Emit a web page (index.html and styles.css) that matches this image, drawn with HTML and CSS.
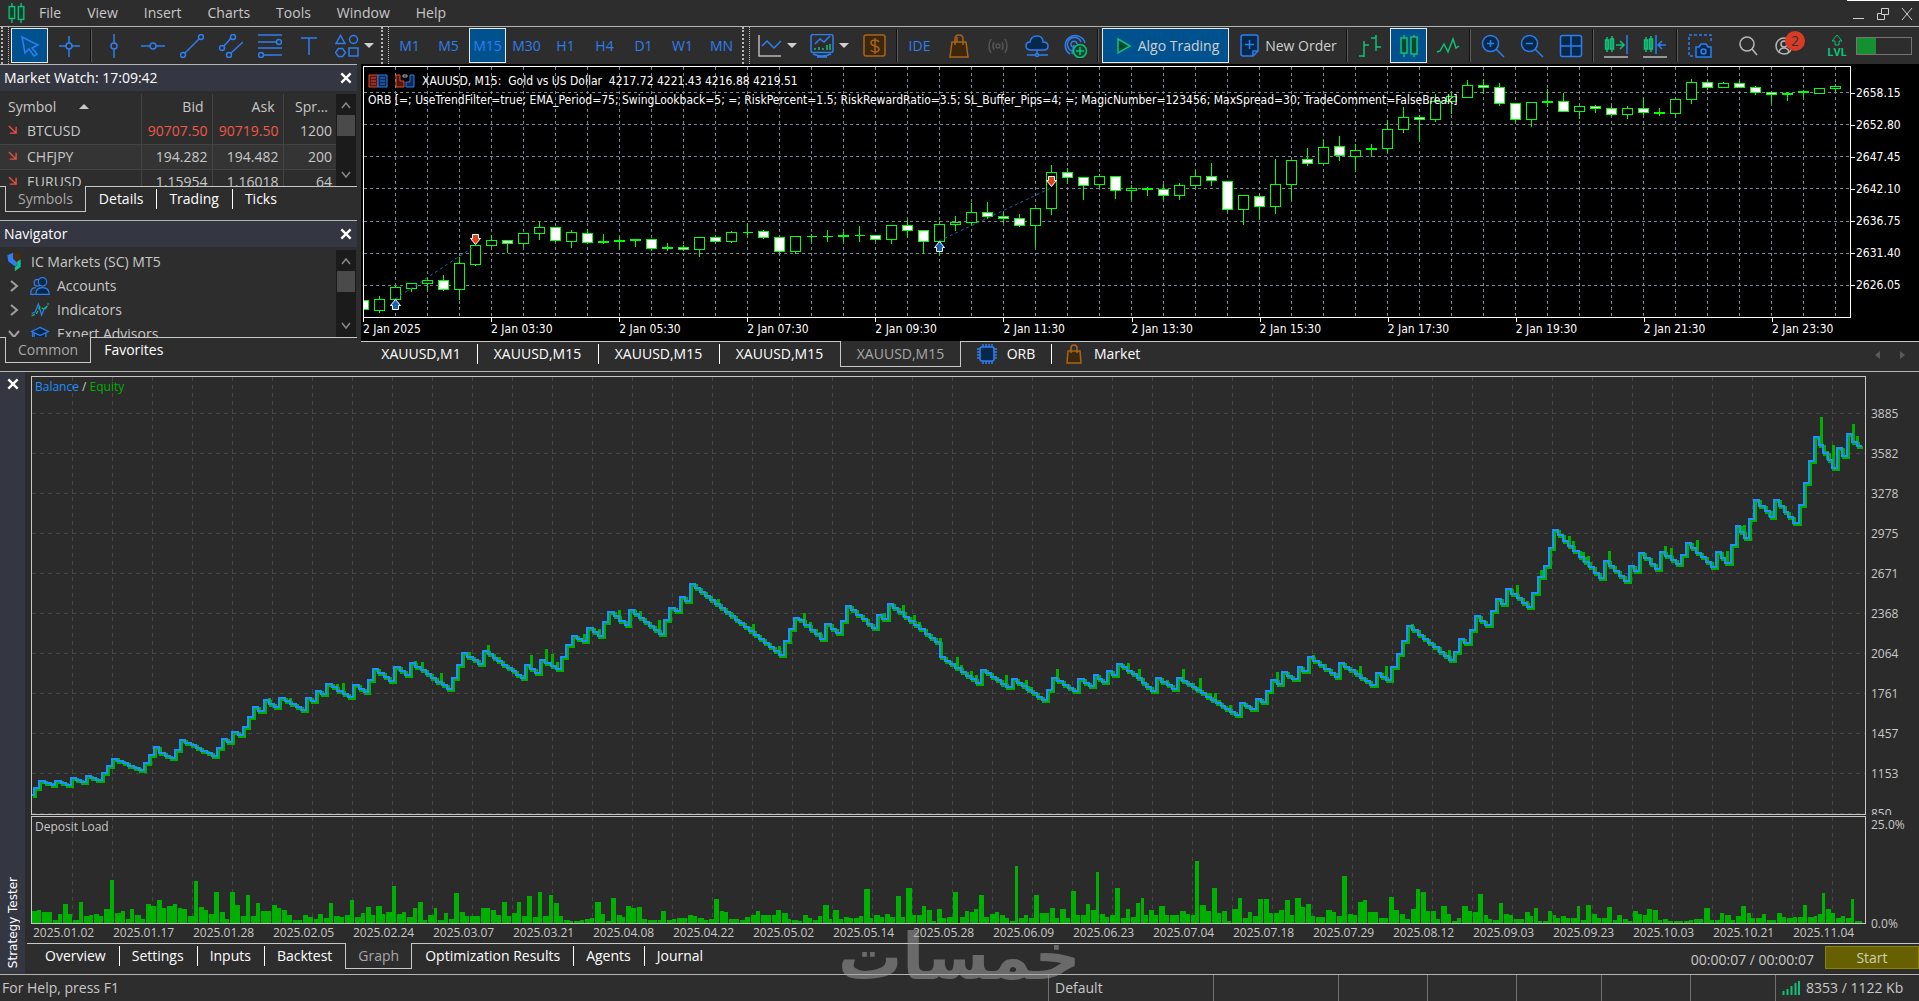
FILE: index.html
```html
<!DOCTYPE html>
<html lang="en">
<head>
<meta charset="utf-8">
<title>XAUUSD, M15 - Strategy Tester</title>
<link rel="stylesheet" href="styles.css">
</head>
<body>
<header class="menubar">
  <svg class="icon app-icon" viewBox="0 0 20 24"><path d="M5 1v22M15 1v22" class="g"/><rect x="2" y="5" width="6" height="13" class="g gf"/><rect x="12" y="5" width="6" height="14" class="g gf"/></svg>
  <nav class="menu">
    <a href="#">File</a><a href="#">View</a><a href="#">Insert</a><a href="#">Charts</a><a href="#">Tools</a><a href="#">Window</a><a href="#">Help</a>
  </nav>
  <div class="window-controls">
    <button aria-label="Minimize"><svg viewBox="0 0 14 14"><path d="M1 11.5h11"/></svg></button>
    <button aria-label="Restore"><svg viewBox="0 0 14 14"><path d="M5.500 1.500h7v6h-7zM8.500 8v4.500h-7v-6h4"/></svg></button>
    <button aria-label="Close"><svg viewBox="0 0 14 14"><path d="M2 1l10 12M12 1L2 13"/></svg></button>
  </div>
</header>

<div class="toolbar">
  <span class="grip"></span>
  <button class="tool active" aria-label="Cursor"><svg class="icon" viewBox="0 0 24 24"><path class="b" d="M4 3l16 8-6 3 5 6-3 2-5-7-4 4z"/></svg></button>
  <button class="tool" aria-label="Crosshair"><svg class="icon" viewBox="0 0 24 24"><path class="b" d="M12 2v7M12 15v8M2 12h7M15 12h8"/><circle class="b" cx="12" cy="12" r="3"/></svg></button>
  <span class="sep"></span>
  <button class="tool" aria-label="Vertical line"><svg class="icon" viewBox="0 0 24 24"><path class="b" d="M12 0v9M12 15v9"/><circle class="b" cx="12" cy="12" r="3"/></svg></button>
  <button class="tool" aria-label="Horizontal line"><svg class="icon" viewBox="0 0 24 24"><path class="b" d="M0 12h9M15 12h9"/><circle class="b" cx="12" cy="12" r="3"/></svg></button>
  <button class="tool" aria-label="Trend line"><svg class="icon" viewBox="0 0 24 24"><path class="b" d="M5 19L19 5"/><circle class="b" cx="3" cy="21" r="2.500"/><circle class="b" cx="21" cy="3" r="2.500"/></svg></button>
  <button class="tool" aria-label="Channel"><svg class="icon" viewBox="0 0 24 24"><path class="b" d="M5 12l7-8M12 19L24 8"/><circle class="b" cx="3" cy="14" r="2.500"/><circle class="b" cx="14" cy="3" r="2.500"/><circle class="b" cx="10" cy="21" r="2.500"/></svg></button>
  <button class="tool" aria-label="Fibonacci"><svg class="icon" viewBox="0 0 24 24"><path class="b" d="M0 1h24M0 8h18M0 14h24M6 21h18"/><circle class="b" cx="21" cy="8" r="2.500"/><circle class="b" cx="3" cy="21" r="2.500"/></svg></button>
  <button class="tool" aria-label="Text"><svg class="icon" viewBox="0 0 24 24"><path class="b" d="M4 4h16M12 4v17"/></svg></button>
  <button class="tool menu-tool" aria-label="Shapes"><svg class="icon" viewBox="0 0 24 24"><path class="b" d="M5.500 1.500L10 9.500H1zM14 14h9v8h-9zM3.500 14.500h4l3 4-3 4h-4l-3-4z"/><circle class="b" cx="18.500" cy="5.500" r="4"/></svg><i class="caret"></i></button>
  <span class="grip"></span>
  <button class="tool">M1</button><button class="tool">M5</button><button class="tool active">M15</button><button class="tool">M30</button><button class="tool">H1</button><button class="tool">H4</button><button class="tool">D1</button><button class="tool">W1</button><button class="tool">MN</button>
  <span class="grip"></span>
  <button class="tool menu-tool" aria-label="Chart type"><svg class="icon" viewBox="0 0 24 24"><path class="w" d="M1 1v21h22"/><path class="b" d="M4 12l5-5 7 7 7-7"/></svg><i class="caret"></i></button>
  <button class="tool menu-tool" aria-label="Indicators"><svg class="icon" viewBox="0 0 24 24"><rect class="b" x="1" y="0.500" width="22" height="18" rx="2"/><path class="b" d="M3 20q9 4 18 0M7 23h10M5 10l5-5 4 3 6-6"/><path class="g" d="M5 16v-2M9 16v-3M13 16v-2M17 16v-5M20 16v-6"/></svg><i class="caret"></i></button>
  <button class="tool" aria-label="Trade"><svg class="icon" viewBox="0 0 24 24"><rect class="o of" x="1" y="1" width="21" height="21" rx="2"/><path class="o" d="M16 8q-1-2-4-2-4 0-4 3 0 2 4 3t4 3q0 3-4 3-3 0-4-2M12 4v16"/></svg></button>
  <span class="sep"></span>
  <button class="tool">IDE</button>
  <button class="tool" aria-label="Market"><svg class="icon" viewBox="0 0 24 24"><path class="o of" d="M5 8h14l2 15H3z"/><path class="o" d="M8 11V5q0-4 4-4t4 4v6M10 8V3"/></svg></button>
  <button class="tool" aria-label="Signals"><svg class="icon" viewBox="0 0 24 24"><path class="d" d="M5 5q-4 7 0 14M8 8q-2 4 0 8M19 5q4 7 0 14M16 8q2 4 0 8"/><circle class="d" cx="12" cy="12" r="2"/></svg></button>
  <button class="tool" aria-label="VPS"><svg class="icon" viewBox="0 0 24 24"><path class="b bf" d="M6 16q-5 0-5-4t4-4q1-6 7-6t6 6q5 0 5 4t-4 4z"/><path class="b" d="M12 16v4M2 21h8M14 21h9"/><circle class="b" cx="12" cy="21" r="1.500"/></svg></button>
  <button class="tool" aria-label="Community"><svg class="icon" viewBox="0 0 24 24"><path class="b" d="M6 20A10 10 0 1 1 21 9M8 17a7 7 0 1 1 9-9M9 13a3 3 0 1 1 4-3M10 11l-2 9"/><circle class="g gf" cx="16" cy="17" r="6.500"/><path class="g" d="M16 13v8M12 17h8"/></svg></button>
  <span class="sep"></span>
  <button class="tool active wide"><svg class="icon" viewBox="0 0 24 24"><path class="g gf" d="M6 5l12 7-12 7z"/></svg>Algo Trading</button>
  <button class="tool wide order"><svg class="icon" viewBox="0 0 24 24"><path class="b bf" d="M5 1h13q2 0 2 2v14l-5 5H5q-2 0-2-2V3q0-2 2-2z"/><path class="b" d="M11.500 6v9M7 10.500h9M15 22v-5h5"/></svg>New Order</button>
  <span class="sep"></span>
  <button class="tool" aria-label="Bars"><svg class="icon" viewBox="0 0 24 24"><path class="g" d="M6 7v16M1 22h5M6 11h5M18 1v16M13 4h5M18 13h5"/></svg></button>
  <button class="tool active" aria-label="Candles"><svg class="icon" viewBox="0 0 24 24"><path class="g" d="M7 1v22M17 1v22"/><rect class="g gf" x="4" y="4" width="6" height="15"/><rect class="g gf" x="14" y="3" width="6" height="17"/></svg></button>
  <button class="tool" aria-label="Line"><svg class="icon" viewBox="0 0 24 24"><path class="g" d="M1 18l3-1 4-7 4 8 5-13 3 9 3-2"/></svg></button>
  <span class="sep"></span>
  <button class="tool" aria-label="Zoom in"><svg class="icon" viewBox="0 0 24 24"><circle class="b bf" cx="9.500" cy="9.500" r="8"/><path class="b" d="M15 15l8 8M9.500 6v7M6 9.500h7"/></svg></button>
  <button class="tool" aria-label="Zoom out"><svg class="icon" viewBox="0 0 24 24"><circle class="b bf" cx="9.500" cy="9.500" r="8"/><path class="b" d="M15 15l8 8M6 9.500h7"/></svg></button>
  <button class="tool" aria-label="Tile"><svg class="icon" viewBox="0 0 24 24"><rect class="b bf" x="1.500" y="1.500" width="21" height="21" rx="2"/><path class="b" d="M12 2v20M2 12h20"/></svg></button>
  <span class="sep"></span>
  <button class="tool" aria-label="Auto scroll"><svg class="icon" viewBox="0 0 24 24"><path class="g" d="M3 3v15M8 2v16M12 11h7M16 7l4 4-4 4"/><path class="g" d="M1.500 6h3v9h-3zM6.500 5h3v10h-3z"/><path class="b" d="M23 1v19"/><path class="w" d="M0 23h24"/></svg></button>
  <button class="tool" aria-label="Shift"><svg class="icon" viewBox="0 0 24 24"><path class="g" d="M3 3v15M8 2v16"/><path class="g" d="M1.500 6h3v9h-3zM6.500 5h3v10h-3z"/><path class="b" d="M13 1v19M23 11h-7M19 7l-4 4 4 4"/><path class="w" d="M0 23h24"/></svg></button>
  <span class="sep"></span>
  <button class="tool" aria-label="Screenshot"><svg class="icon" viewBox="0 0 24 24"><path class="b" stroke-dasharray="3 2" d="M5 22H1V1h22v8"/><path class="b bf" d="M8 13h3l2-3h5l2 3h3v10H8z"/><circle class="b" cx="15.500" cy="17.500" r="2.500"/></svg></button>
  <div class="toolbar-end">
    <button class="tool" aria-label="Search"><svg class="icon" viewBox="0 0 24 24"><circle class="w" cx="11" cy="10" r="7"/><path class="w" d="M16 15l5 6"/></svg></button>
    <button class="tool account" aria-label="Notifications"><svg class="icon" viewBox="0 0 24 24"><circle class="w" cx="9" cy="12" r="8"/><circle class="w" cx="9" cy="10" r="3"/><path class="w" d="M4 18q1-4 5-4t5 4"/></svg><b class="badge">2</b></button>
    <div class="level"><svg viewBox="0 0 14 12"><path class="g" d="M5 11V7H2l5-6 5 6H9v4z"/></svg>LVL</div>
    <div class="meter"><span></span></div>
  </div>
</div>

<main class="upper">
  <aside class="side">
    <section class="panel">
      <h2>Market Watch: 17:09:42<button class="close" aria-label="Close Market Watch"><svg viewBox="0 0 12 12"><path d="M2 2l8 8M10 2l-8 8"/></svg></button></h2>
      <div class="panel-body">
        <table class="quotes">
          <thead><tr><th>Symbol<i class="caret up"></i></th><th>Bid</th><th>Ask</th><th>Spr...</th></tr></thead>
          <tbody>
            <tr><td><svg viewBox="0 0 10 10"><path d="M1 1l8 8M9 2v7H2"/></svg>BTCUSD</td><td class="down">90707.50</td><td class="down">90719.50</td><td>1200</td></tr>
            <tr><td><svg viewBox="0 0 10 10"><path d="M1 1l8 8M9 2v7H2"/></svg>CHFJPY</td><td>194.282</td><td>194.482</td><td>200</td></tr>
            <tr><td><svg viewBox="0 0 10 10"><path d="M1 1l8 8M9 2v7H2"/></svg>EURUSD</td><td>1.15954</td><td>1.16018</td><td>64</td></tr>
          </tbody>
        </table>
        <div class="scroll"><svg viewBox="0 0 12 8"><path d="M2 7l4-5 4 5"/></svg><span></span><svg viewBox="0 0 12 8"><path d="M2 1l4 5 4-5"/></svg></div>
      </div>
      <nav class="tabs"><a href="#" class="on">Symbols</a><a href="#">Details</a><a href="#">Trading</a><a href="#">Ticks</a></nav>
    </section>
    <section class="panel">
      <h2>Navigator<button class="close" aria-label="Close Navigator"><svg viewBox="0 0 12 12"><path d="M2 2l8 8M10 2l-8 8"/></svg></button></h2>
      <div class="panel-body">
        <ul class="tree">
          <li class="root"><svg class="icon" viewBox="0 0 20 24"><path fill="#2d7ff0" d="M2 4l7-3v7l5 5v3l-3 1-8-6z"/><path fill="#4a2c10" d="M10 1l8 1v7l-6 2-3-4z"/><path fill="#18c088" d="M18 9v9l-7 5v-5l3-2v-5z"/></svg>IC Markets (SC) MT5</li>
          <li><svg class="chev" viewBox="0 0 12 12"><path d="M3 1l6 5-6 5"/></svg><svg class="icon" viewBox="0 0 24 24"><circle class="b" cx="9" cy="8" r="4"/><circle class="b bf" cx="15" cy="7" r="5"/><path class="b" d="M7 14q-6 0-6 6v2h6"/><path class="b bf" d="M7 22q0-8 8-8t8 8z"/></svg>Accounts</li>
          <li><svg class="chev" viewBox="0 0 12 12"><path d="M3 1l6 5-6 5"/></svg><svg class="icon" viewBox="0 0 24 24"><path class="b" d="M2 16l4-1 4-10 4 13 3-8 4-3"/><path class="g" stroke-dasharray="4 2" d="M2 19l6-3 4-8 6 4 4-8"/></svg>Indicators</li>
          <li><svg class="chev open" viewBox="0 0 12 12"><path d="M1 3l5 6 5-6"/></svg><svg class="icon" viewBox="0 0 24 24"><path class="b bf" d="M5 10v9q7 5 14 0v-9"/><path class="b bf" d="M12 4l10 5-10 5L2 9zM3 9v8"/></svg>Expert Advisors</li>
        </ul>
        <div class="scroll"><svg viewBox="0 0 12 8"><path d="M2 7l4-5 4 5"/></svg><span></span><svg viewBox="0 0 12 8"><path d="M2 1l4 5 4-5"/></svg></div>
      </div>
      <nav class="tabs"><a href="#" class="on">Common</a><a href="#">Favorites</a></nav>
    </section>
  </aside>

  <section class="chart-area">
    <div class="price-chart">
      <div class="price-plot">
        <svg id="candles" viewBox="364 67 1486 250" preserveAspectRatio="none"></svg>
        <div class="chart-info">
          <p><svg class="icon" viewBox="0 0 20 14"><path d="M1 1h9v12H1z" fill="#501810" stroke="#e04a30"/><path d="M10 1h9v12h-9z" fill="#0a2850" stroke="#2d7ff0"/><path d="M3 4h5M3 7h5M3 10h5" stroke="#e04a30"/><path d="M12 4h5M12 7h5M12 10h5" stroke="#2d7ff0"/></svg><svg class="icon" viewBox="0 0 20 14"><path d="M1 1h4v6h4v6H1z" fill="#501810" stroke="#e04a30"/><path d="M11 13V8h4V1h4v12z" fill="#0a2850" stroke="#2d7ff0"/><path d="M8 1h4v2H8z" stroke="#aaa" fill="none"/></svg><span>XAUUSD, M15:&nbsp; Gold vs US Dollar&nbsp; 4217.72 4221.43 4216.88 4219.51</span></p>
          <p>ORB [=; UseTrendFilter=true; EMA_Period=75; SwingLookback=5; =; RiskPercent=1.5; RiskRewardRatio=3.5; SL_Buffer_Pips=4; =; MagicNumber=123456; MaxSpread=30; TradeComment=FalseBreak]</p>
        </div>
      </div>
      <div class="price-axis"><span>2658.15</span><span>2652.80</span><span>2647.45</span><span>2642.10</span><span>2636.75</span><span>2631.40</span><span>2626.05</span></div>
      <div class="time-axis"><span>2 Jan 2025</span><span>2 Jan 03:30</span><span>2 Jan 05:30</span><span>2 Jan 07:30</span><span>2 Jan 09:30</span><span>2 Jan 11:30</span><span>2 Jan 13:30</span><span>2 Jan 15:30</span><span>2 Jan 17:30</span><span>2 Jan 19:30</span><span>2 Jan 21:30</span><span>2 Jan 23:30</span></div>
    </div>
    <nav class="tabs chart-tabs">
      <a href="#">XAUUSD,M1</a><a href="#">XAUUSD,M15</a><a href="#">XAUUSD,M15</a><a href="#">XAUUSD,M15</a><a href="#" class="on">XAUUSD,M15</a>
      <a href="#"><svg class="icon" viewBox="0 0 20 20"><path class="b" d="M6 0v20M9 0v20M12 0v20M15 0v20M0 5h20M0 8h20M0 11h20M0 14h20"/><rect class="b bf" x="3" y="3" width="14" height="14" rx="2"/></svg>ORB</a>
      <a href="#"><svg class="icon" viewBox="0 0 20 20"><path class="o of" d="M4 7h12l1 12H3z"/><path class="o" d="M7 9V4q0-3 3-3t3 3v5"/></svg>Market</a>
      <span class="pager"><svg viewBox="0 0 5 8"><path d="M5 0v8L0 4z"/></svg><svg viewBox="0 0 5 8"><path d="M0 0v8l5-4z"/></svg></span>
    </nav>
  </section>
</main>

<section class="tester">
  <div class="tester-strip">
    <button class="close" aria-label="Close Strategy Tester"><svg viewBox="0 0 12 12"><path d="M2 2l8 8M10 2l-8 8"/></svg></button>
    <h2>Strategy Tester</h2>
  </div>
  <div class="tester-body">
    <div class="graphs">
      <div class="plot"><svg id="balance" viewBox="32 377 1833 437" preserveAspectRatio="none"></svg><p class="legend"><span class="bal">Balance</span> / <span class="eq">Equity</span></p></div>
      <div class="value-axis"><span>3885</span><span>3582</span><span>3278</span><span>2975</span><span>2671</span><span>2368</span><span>2064</span><span>1761</span><span>1457</span><span>1153</span><span>850</span></div>
      <div class="plot"><svg id="deposit" viewBox="32 817 1833 106" preserveAspectRatio="none"></svg><p class="legend">Deposit Load</p></div>
      <div class="load-axis"><span>25.0%</span><span>0.0%</span></div>
      <div class="date-axis"><span>2025.01.02</span><span>2025.01.17</span><span>2025.01.28</span><span>2025.02.05</span><span>2025.02.24</span><span>2025.03.07</span><span>2025.03.21</span><span>2025.04.08</span><span>2025.04.22</span><span>2025.05.02</span><span>2025.05.14</span><span>2025.05.28</span><span>2025.06.09</span><span>2025.06.23</span><span>2025.07.04</span><span>2025.07.18</span><span>2025.07.29</span><span>2025.08.12</span><span>2025.09.03</span><span>2025.09.23</span><span>2025.10.03</span><span>2025.10.21</span><span>2025.11.04</span></div>
    </div>
    <nav class="tabs tester-tabs">
      <a href="#">Overview</a><a href="#">Settings</a><a href="#">Inputs</a><a href="#">Backtest</a><a href="#" class="on">Graph</a><a href="#">Optimization Results</a><a href="#">Agents</a><a href="#">Journal</a>
      <span class="elapsed">00:00:07 / 00:00:07</span>
      <button class="start">Start</button>
    </nav>
  </div>
</section>

<footer class="status">
  <span class="help">For Help, press F1</span><span class="s165">Default</span><span class="s125"></span><span class="s88"></span><span class="s88"></span><span class="s85"></span><span class="s88"></span><span class="s85"></span>
  <span class="traffic"><svg viewBox="0 0 18 14"><path class="g2" d="M1.500 14v-4M5.500 14v-6M9.500 14V5M13.500 14V2M17 14V0"/></svg>8353 / 1122 Kb</span>
</footer>
<div class="watermark" lang="ar" dir="rtl">خمسات</div>
<script src="charts.js"></script>
</body>
</html>
```
FILE: styles.css
```css
* { box-sizing: border-box; }
body {
  margin: 0;
  height: 100vh;
  display: flex;
  flex-direction: column;
  background: #2d2d2d;
  color: #c8c8c8;
  font: 14px/20px "Open Sans", "Noto Sans", sans-serif;
  position: relative;
  overflow-x: hidden;
}
a { color: inherit; text-decoration: none; }
button { font: inherit; color: inherit; background: none; border: 0; padding: 0; }
p, h2, ul { margin: 0; padding: 0; font-size: inherit; font-weight: 400; }
svg { display: block; fill: none; flex: none; }
.icon { width: 24px; height: 24px; stroke-width: 1.5; }
.b { stroke: #2d7ff0; }
.bf { fill: #06284a; }
.g { stroke: #10c078; }
.gf { fill: #0a4630; }
.o { stroke: #a86418; }
.of { fill: #3c260c; }
.w { stroke: #b8b8b8; }
.d { stroke: #555; }

/* menu bar */
.menubar { height: 27px; flex: none; display: flex; align-items: center; border-bottom: 1px solid #b4b4b4; padding-left: 7px; }
.app-icon { width: 19px; height: 22px; }
.menu { display: flex; flex: 1; }
.menu a { padding: 0 13px; }
.window-controls { display: flex; height: 26px; border-top: 1px solid #fff; }
.window-controls button { width: 24px; display: grid; place-items: center; }
.window-controls svg { width: 14px; height: 14px; stroke: #d0d0d0; stroke-width: 1; }

/* toolbar */
.toolbar { height: 37px; flex: none; display: flex; align-items: center; }
.tool { width: 37px; height: 35px; margin: 0 1px; flex: none; display: flex; align-items: center; justify-content: center; color: #2d7ff0; border: 1px solid transparent; }
.tool.active { background: #00528f; border-color: #e8e8e8; }
.menu-tool { width: 50px; gap: 5px; }
.wide { width: 127px; margin: 0 2px 0 1px; color: #d0d0d0; gap: 2px; }
.wide.order { width: 111px; margin: 0 1px; gap: 3px; }
.caret { border: 5px solid transparent; border-top-color: #d0d0d0; border-bottom: 0; }
.caret.up { border-top: 0; border-bottom: 5px solid #c8c8c8; }
.grip { width: 8px; height: 37px; margin: 0 1px; flex: none; border-left: 2px dotted #b8b8b8; border-right: 1px dotted #b8b8b8; }
.sep { width: 2px; height: 33px; margin: 0 2px; flex: none; background: #111; border-right: 1px solid #5a5a5a; }
.toolbar-end { margin-left: auto; display: flex; align-items: center; padding-right: 7px; }
.account { position: relative; }
.badge { position: absolute; left: 16px; top: 2px; width: 20px; height: 20px; border-radius: 50%; background: #d83c24; color: #333; font-weight: 400; line-height: 20px; }
.level { width: 30px; margin: 0 4px 0 16px; font-size: 11px; line-height: 11px; font-weight: 700; color: #10c078; text-align: center; }
.level svg { width: 14px; height: 12px; margin: 0 auto; }
.meter { width: 56px; height: 18px; border: 1px solid #7a7272; }
.meter span { display: block; width: 35%; height: 16px; background: #149030; }

/* upper half */
.upper { display: flex; flex: none; height: 307px; }
.side { width: 357px; flex: none; display: flex; flex-direction: column; }
.panel { display: flex; flex-direction: column; border-top: 1px solid #b4b4b4; flex: 1; min-height: 0; }
.panel:first-child { flex: 0 0 156px; }
.panel h2 { height: 26px; padding: 0 4px; display: flex; align-items: center; justify-content: space-between; background: #343642; color: #fff; flex: none; }
.close svg { width: 14px; height: 14px; stroke: #fff; stroke-width: 2; }
.panel-body { flex: 1; min-height: 0; display: flex; overflow: hidden; margin-top: 3px; }
.quotes { flex: 1; border-collapse: collapse; table-layout: fixed; height: 100px; }
.quotes th { font-weight: 400; text-align: right; height: 25px; padding: 0 8px; border-left: 1px solid #444; }
.quotes th .caret { display: inline-block; margin: 0 0 3px 23px; }
.quotes td { text-align: right; height: 25px; padding: 0 4px; border: 1px solid #444; border-width: 1px 0 0 1px; }
.quotes tbody tr:first-child td { border-top: 0; }
.quotes tr > :first-child { text-align: left; border-left: 0; width: 141px; padding-left: 8px; }
.quotes tr > :nth-child(2), .quotes tr > :nth-child(3) { width: 71px; }
.quotes td svg { display: inline-block; width: 9px; height: 9px; stroke: #e85040; stroke-width: 1.5; margin: 0 10px 2px 0; }
.quotes tbody tr:nth-child(even) { background: #343434; }
.quotes .down { color: #f05848; }
.scroll { width: 20px; margin-right: 1px; background: #1b1b1b; display: flex; flex-direction: column; align-items: center; padding: 7px 0; flex: none; }
.scroll svg { width: 12px; height: 8px; stroke: #888; stroke-width: 1.5; }
.scroll span { width: 18px; height: 21px; background: #4a4a4a; margin: 6px 0 auto; }
.tree { flex: 1; list-style: none; }
.tree li { height: 24px; display: flex; align-items: center; padding-left: 8px; white-space: nowrap; }
.tree .icon { width: 20px; height: 20px; margin: 0 7px 0 10px; }
.tree .root { padding-left: 4px; }
.tree .root .icon { margin: 0 7px 0 0; }
.chev { width: 12px; height: 12px; stroke: #a0a0a0; stroke-width: 2; }

/* tab strips */
.tabs { display: flex; flex: none; height: 34px; border-top: 1px solid #c8c8c8; padding-left: 5px; color: #fff; align-items: flex-start; }
.tabs a { height: 24px; line-height: 24px; padding: 0 13px; position: relative; display: flex; align-items: center; white-space: nowrap; }
.tabs a + a:not(.on)::before { content: ""; position: absolute; left: 0; top: 2px; height: 20px; border-left: 1px solid #fff; }
.tabs a.on + a::before { display: none; }
.tabs a.on { color: #a8a8a8; background: #2d2d2d; border: 1px solid #c8c8c8; border-top: 0; margin-top: -1px; height: 26px; padding: 0 12px; }

/* price chart */
.chart-area { flex: 1; min-width: 0; margin-left: 4px; display: flex; flex-direction: column; }
.price-chart { flex: 1; display: grid; grid-template: 252px 1fr / minmax(0, 1fr) 68px; background: #000; color: #fff; padding: 2px 0 0 2px; font: 12px/16px "DejaVu Sans Condensed", "DejaVu Sans", sans-serif; }
.price-plot { border: 1px solid #fff; position: relative; overflow: hidden; }
.price-plot > svg, .plot > svg { width: 100%; height: 100%; }
.chart-info { position: absolute; left: 4px; top: 4px; white-space: nowrap; }
.chart-info p { height: 19px; display: flex; align-items: center; gap: 7px; }
.chart-info .icon { width: 20px; height: 16px; stroke-width: 1; }
.price-axis { padding-top: 11px; }
.price-axis span { height: 32px; display: flex; align-items: center; gap: 1px; }
.price-axis span::before { content: ""; width: 4px; height: 1px; background: #fff; }
.time-axis { display: grid; grid-template-columns: repeat(11, 128fr) 79fr; white-space: nowrap; }
.time-axis span { min-width: 0; padding-top: 3px; background: linear-gradient(#fff, #fff) left top / 1px 4px no-repeat; }
.chart-tabs { height: 30px; padding-left: 4px; }
.chart-tabs a { min-width: 121px; justify-content: center; }
.chart-tabs a:first-child { min-width: 112px; }
.chart-tabs a:has(svg) { min-width: 90px; gap: 10px; }
.chart-tabs a:nth-last-child(2) { min-width: 100px; }
.chart-tabs .icon { width: 20px; height: 20px; }
.pager { margin-left: auto; display: flex; gap: 20px; padding: 9px 14px 0 0; }
.pager svg { width: 5px; height: 8px; fill: #5a5a5a; }

/* strategy tester */
.tester { flex: 1; display: flex; border-top: 1px solid #b4b4b4; min-height: 0; }
.tester-strip { width: 25px; flex: none; background: #343642; display: flex; flex-direction: column; align-items: center; justify-content: space-between; padding: 5px 0 6px; }
.tester-strip h2 { writing-mode: vertical-rl; transform: rotate(180deg); color: #fff; font: 12px/24px "DejaVu Sans", sans-serif; }
.tester-body { flex: 1; min-width: 0; min-height: 0; display: flex; flex-direction: column; }
.graphs { flex: 1; min-height: 0; display: grid; grid-template: minmax(0, 1fr) 108px 18px / minmax(0, 1fr) 53px; row-gap: 1px; padding: 4px 0 0 6px; font-size: 12px; background: #2b2b2b; }
.plot { border: 1px solid #c8c8c8; position: relative; min-height: 0; }
.legend { position: absolute; left: 3px; top: 0; }
.bal { color: #1e90ff; }
.eq { color: #00b000; }
.value-axis { display: grid; grid-template-rows: repeat(10, minmax(0, 40fr)) minmax(0, 21fr); padding: 18px 0 0 5px; overflow: hidden; min-height: 0; line-height: 40px; }
.load-axis { display: flex; flex-direction: column; justify-content: space-between; padding-left: 5px; line-height: 18px; margin-bottom: -9px; }
.date-axis { display: grid; grid-template-columns: repeat(22, 80fr) 74fr; white-space: nowrap; line-height: 16px; padding-left: 1px; }
.date-axis span { min-width: 0; padding-left: 1px; }
.tester-tabs { height: 31px; margin-left: 2px; }
.elapsed { margin-left: auto; color: #c8c8c8; line-height: 31px; padding-right: 11px; }
.start { width: 94px; height: 23px; margin-top: 2px; background: #666000; border: 1px solid #8a8200; color: #d0d0b8; }

/* status bar */
.status { height: 27px; flex: none; display: flex; border-top: 1px solid #b4b4b4; line-height: 26px; }
.status span { border-left: 1px solid #707070; padding-left: 6px; }
.status .help { flex: 1; border: 0; padding-left: 2px; }
.s165 { width: 165px; }
.s125 { width: 125px; }
.s88 { width: 89px; }
.s85 { width: 85px; }
.status .traffic { width: 144px; display: flex; align-items: center; gap: 6px; }
.traffic svg { width: 18px; height: 14px; }
.g2 { stroke: #10c078; stroke-width: 2; }
.watermark { position: absolute; left: 838px; bottom: 8px; font: 700 64px/72px "DejaVu Sans", sans-serif; color: #a8a8a8; opacity: 0.5; pointer-events: none; }

/* chart strokes */
.grid-price { stroke: #778899; stroke-dasharray: 3 3; shape-rendering: crispEdges; }
.grid-test { stroke: #484848; stroke-dasharray: 4 4; shape-rendering: crispEdges; }
.candle { stroke: #00ff00; fill: #000; shape-rendering: crispEdges; }
.candle.bear { fill: #fff; }
.deal { stroke: #1464b4; stroke-dasharray: 3 3; }
.arrow { stroke: #fff; }
.arrow.buy { fill: #1464b4; }
.arrow.sell { fill: #e0401c; }
.line-bal { stroke: #1e90ff; stroke-width: 2; fill: none; shape-rendering: crispEdges; }
.line-eq { stroke: #00b000; stroke-width: 3; fill: none; shape-rendering: crispEdges; }
.bars { fill: #00b000; shape-rendering: crispEdges; }
```
FILE: charts.js
```js
function path(svg, cls, d) {
  const p = document.createElementNS('http://www.w3.org/2000/svg', 'path');
  p.setAttribute('class', cls);
  p.setAttribute('d', d);
  svg.appendChild(p);
}

// ---- price chart: high, top, bottom, low (thirds of a pixel below y=60); w = bearish
const candles = `720 720 748 748w,705 718 751 756,676 682 718 720,667 670 684 695,648 661 670 690,642 661 688 690w,588 610 688 717,556 556 613 617,
522 541 556 560,538 542 550 576w,516 520 550 558,485 502 520 537,499 502 541 545w,507 517 544 563,505 520 547 550w,519 544 547 550,528 541 544 567,534 538 541 558,
538 538 566 570w,546 562 565 571,553 562 569 571w,528 532 569 588,526 532 544 550w,510 517 545 546,487 517 517 530,507 514 532 534w,532 532 574 578w,525 529 574 581,
519 529 529 543,507 529 529 543,513 526 529 544,495 526 526 543,523 526 538 540w,496 496 538 551,478 496 511 532w,511 511 545 580w,480 493 545 584,465 487 493 510,
427 457 488 496,423 457 469 475w,455 469 475 488w,459 475 496 498w,445 445 496 559,312 337 445 462,321 337 352 369w,348 352 376 417w,340 349 374 382,346 349 391 414w,
373 385 391 418,378 385 388 405,370 388 406 418w,366 376 406 417,330 349 376 386,306 349 361 375w,363 364 448 455w,402 406 448 494,400 409 439 479w,294 373 439 459,
297 301 373 420,261 298 310 315w,238 262 310 314,225 259 286 302w,250 271 290 333,250 265 268 290,178 208 265 278,138 172 208 218,163 172 178 245w,100 124 178 185,
93 109 124 159,58 76 112 112,55 76 82 101w,66 82 130 137w,126 130 178 188w,124 127 178 200,85 124 127 139,97 124 155 155w,133 139 154 176,132 139 145 158w,
137 145 163 166w,136 145 163 176,113 145 157 163w,142 157 160 167,115 118 160 170,55 67 118 131,58 67 82 88w,63 70 82 82,60 70 82 82w,76 82 97 104w,
90 97 103 127w,94 100 103 122,87 94 97 109,82 85 101 101,71 79 85 94`.split(',');

const price = document.getElementById('candles');
let d = '';
for (let x = 395; x < 1850; x += 32) d += `M${x + 0.5} 67V317`;
for (const y of [92, 124, 156, 188, 221, 253, 285]) d += `M364 ${y + 0.5}H1850`;
path(price, 'grid-price', d);
candles.forEach((c, i) => {
  const [h, t, b, l] = c.trim().split(' ').map(v => Math.floor(60 + parseInt(v) / 3) + 0.5);
  const x = 363.5 + i * 16;
  path(price, c.endsWith('w') ? 'candle bear' : 'candle', `M${x} ${h}V${t}M${x} ${b}V${l + 0.5}M${x - 5} ${t}h10V${b}h-10z`);
});
path(price, 'deal', 'M395 299L475 246M939 241L1051 188');
const up = (x, y) => `M${x} ${y}l5 6h-2v4h-6v-4h-2z`;
const down = (x, y) => `M${x} ${y}l5-6h-2v-4h-6v4h-2z`;
path(price, 'arrow buy', up(395.5, 299.5) + up(939.5, 241.5));
path(price, 'arrow sell', down(475.5, 244.5) + down(1051.5, 186.5));

// ---- balance and equity: blocks of turning points, each with origin and x scale
const blocks = [
  { x: 0, y: 380, s: 2.376, p: `75 1245 80 1223 93 1203 120 1215 131 1203 157 1216 169 1194 193 1206 205 1188 229 1200 243 1180 254 1159 267 1137 330 1170 342 1150 354 1126 366 1101 378 1118 404 1135 416 1109 427 1080 504 1129 516 1105 528 1077 540 1086 552 1055 566 1066 578 1042 590 1011 602 981 614 993 627 960 651 981 662 954 716 989 727 954 739 963 750 933 762 943 774 912 828 951 838 915 864 937 875 901 887 866 924 902 936 860 962 886 974 849 1062 927 1073 895 1085 856 1098 819 1136 853 1148 812 1237 895 1248 855 1272 880 1283 840 1320 867 1333 831 1346 796 1358 768 1382 782 1394 744 1420 769 1432 726 1444 696 1484 736 1495 690`,
    e: `280 1133 330 1160 640 953 690 953 800 913 816 910 948 857 985 842 1003 847 1048 880 1115 815 1160 796 1186 830 1261 826 1298 808 1312 823 1323 845 1388 763 1424 748 1470 690 1507 686 1521 692 1566 720` },
  { x: 640, y: 540, s: 2.376, p: `46 283 57 240 70 204 83 213 95 171 107 183 119 131 330 346 343 303 355 268 366 234 378 240 427 296 439 252 465 279 477 243 489 198 551 265 563 224 575 237 589 191 700 306 713 351 798 428 811 390 870 441 883 417 954 481 967 450 979 414 1028 453 1041 417 1067 439 1079 405 1097 427 1109 393 1122 405 1133 372 1170 402 1215 452 1226 414 1264 448 1276 414 1413 524 1426 489 1450 508 1463 477 1475 487 1488 453 1500 420 1513 433 1525 396 1549 417`,
    e: `46 242 157 155 186 178 219 218 269 253 331 317 390 218 403 245 418 268 428 275 580 220 625 194 652 224 664 245 687 278 713 295 754 352 763 376 787 394 799 406 870 406 918 420 930 440 991 388 1018 432 1160 368 1186 386 1253 420 1291 388 1313 430 1331 415 1355 458 1367 458 1376 480 1403 496 1514 395` },
  { x: 1280, y: 390, s: 2.454, p: `43 831 55 844 68 801 134 860 145 819 220 886 235 849 261 871 272 831 287 793 300 753 312 708 414 811 427 787 440 747 452 760 467 720 479 678 504 705 517 663 530 627 542 643 555 597 606 652 618 609 633 562 648 528 660 475 670 420 783 565 796 513 845 573 857 528 869 543 881 489 921 538 933 486 973 523 985 496 997 459 1058 532 1070 486 1093 520 1106 465 1118 408 1139 444 1151 387 1164 330 1202 380 1213 330 1259 399 1273 345 1286 280 1299 213 1311 141 1322 165 1355 235 1367 174 1380 199 1392 132 1404 156 1415 168 1428 168`,
    e: `81 795 110 822 196 827 261 829 323 702 388 770 415 779 568 594 582 584 606 632 641 539 708 437 720 453 743 485 756 497 808 482 944 467 960 474 1024 449 1098 482 1139 404 1200 359 1328 80 1343 184 1356 164 1405 101 1416 139` }
];
const unpack = (b, key) => {
  const n = b[key].split(' ').map(Number), out = [];
  for (let i = 0; i < n.length; i += 2) out.push([Math.round(b.x + n[i] / b.s), Math.round(b.y + n[i + 1] / 3)]);
  return out;
};
const knots = blocks.flatMap(b => unpack(b, 'p'));
const spikes = blocks.flatMap(b => unpack(b, 'e'));
const steps = [knots[0]];
for (let i = 1; i < knots.length; i++) {
  const [x0, y0] = knots[i - 1], [x1, y1] = knots[i];
  const n = y1 < y0 ? 1 : Math.max(1, Math.round((x1 - x0) / 5));
  for (let k = 1; k <= n; k++) steps.push([Math.round(x0 + (x1 - x0) * k / n), Math.round(y0 + (y1 - y0) * k / n)]);
}
const stairs = (dx, dy) => steps.map(([x, y], i) => i ? `H${x + dx}V${y + dy}` : `M${x + dx} ${y + dy}`).join('');
let eq = stairs(1, 1);
steps.forEach(([x, y], i) => {
  if (i && steps[i - 1][1] - y > 5) eq += `M${x + 1} ${y + 2}V${steps[i - 1][1] + 3}`;
});
spikes.forEach(([x, y]) => {
  const at = steps.filter(s => s[0] <= x + 1).pop();
  eq += `M${x} ${y}V${Math.max(y + 3, at[1])}`;
});
const bal = document.getElementById('balance');
d = '';
for (let x = 72; x < 1865; x += 40) d += `M${x + 0.5} 377V814`;
const columns = d.replace(/377V814/g, '817V923');
for (let y = 413; y < 814; y += 40) d += `M32 ${y + 0.5}H1865`;
path(bal, 'grid-test', d);
path(bal, 'line-eq', eq);
path(bal, 'line-bal', stairs(0, 0));

// ---- deposit load: bar start and top
const loads = [
  { x: 0, s: 1.633, end: 1566, p: `53 333 60 330 69 336 78 336 87 360 95 342 103 312 111 342 120 360 129 306 137 348 145 345 153 342 161 347 170 327 179 240 188 340 197 334 205 357 213 327 221 345 230 357 239 312 247 318 256 300 264 324 273 318 282 312 290 325 298 327 307 348 316 243 325 321 333 330 341 341 350 276 359 336 367 357 375 276 384 315 393 348 401 286 410 348 418 310 426 333 435 333 444 316 452 325 460 330 469 345 478 360 487 360 495 345 503 350 512 357 520 342 529 354 537 310 546 348 555 351 563 345 571 300 580 351 589 338 597 321 606 345 614 318 623 341 631 336 640 258 648 342 656 337 665 350 674 325 682 307 691 360 699 345 708 324 716 360 725 338 733 357 742 279 751 337 759 347 768 348 776 348 785 324 793 324 802 330 810 345 819 306 828 348 836 338 845 306 853 347 861 287 870 351 878 276 887 348 896 286 904 309 913 348 921 359 930 363 938 363 947 359 955 357 963 354 972 306 981 342 990 362 998 295 1007 345 1015 351 1023 318 1031 324 1040 321 1049 357 1058 360 1066 360 1074 360 1080 333 1089 359 1098 357 1106 353 1115 354 1123 345 1132 348 1140 354 1149 360 1158 357 1166 297 1175 333 1183 337 1191 357 1200 357 1208 360 1217 350 1226 345 1234 332 1243 345 1252 345 1260 345 1268 330 1277 340 1286 356 1294 360 1303 363 1311 345 1320 354 1328 360 1336 348 1344 315 1353 357 1361 330 1370 357 1378 350 1387 354 1395 354 1403 348 1411 267 1420 354 1428 345 1437 350 1445 342 1453 351 1463 288 1471 351 1480 264 1489 345 1497 345 1505 318 1513 330 1522 362 1530 327 1539 354 1547 351 1556 276` },
  { x: 960, s: 1.635, end: 1474, p: `0 350 8 333 16 336 23 327 31 286 40 350 49 342 57 336 65 345 73 354 81 363 90 198 96 354 105 345 113 354 121 286 130 338 139 338 147 324 156 354 164 327 173 354 181 273 190 345 198 345 206 312 215 330 223 216 229 342 237 350 246 345 254 265 263 354 271 328 280 351 288 309 296 294 301 345 309 330 317 345 326 318 335 345 343 345 352 345 360 333 369 341 377 345 385 183 393 315 402 333 412 264 420 338 428 333 437 363 445 327 454 295 463 354 471 336 479 348 488 297 497 297 505 338 513 340 521 330 531 300 540 345 548 294 557 321 566 312 574 348 582 351 591 351 599 330 608 336 617 348 625 229 634 342 642 345 650 305 659 300 667 336 676 336 685 354 693 354 701 290 710 330 719 342 728 357 737 327 745 267 753 276 762 333 770 333 778 357 787 318 796 342 804 363 812 354 821 318 830 333 838 336 847 283 856 345 864 357 872 360 881 309 890 342 898 345 906 357 915 357 923 336 932 348 939 324 945 363 953 363 961 333 969 345 974 354 982 348 991 354 999 354 1008 318 1016 360 1024 316 1033 342 1042 354 1050 354 1058 322 1067 360 1075 346 1084 357 1092 363 1100 334 1108 342 1116 345 1124 327 1133 331 1141 360 1150 357 1158 363 1167 363 1175 363 1183 363 1192 360 1200 357 1209 357 1217 324 1226 360 1235 360 1243 339 1251 345 1260 360 1269 348 1277 318 1286 340 1294 353 1302 354 1311 342 1320 360 1328 360 1336 339 1344 350 1352 354 1362 351 1370 351 1378 315 1387 351 1396 348 1403 341 1409 279 1416 327 1424 340 1433 354 1441 348 1449 354 1456 297 1464 363` }
];
let bars = '';
loads.forEach(b => {
  const n = b.p.split(' ').map(Number);
  for (let i = 0; i < n.length; i += 2) {
    const x0 = Math.round(b.x + n[i] / b.s), x1 = Math.round(b.x + (n[i + 2] || b.end) / b.s);
    bars += `M${x0} 923V${Math.round(800 + n[i + 1] / 3)}H${x1 - i / 2 % 2}V923z`;
  }
});
const dep = document.getElementById('deposit');
path(dep, 'grid-test', columns);
path(dep, 'bars', bars);
```
